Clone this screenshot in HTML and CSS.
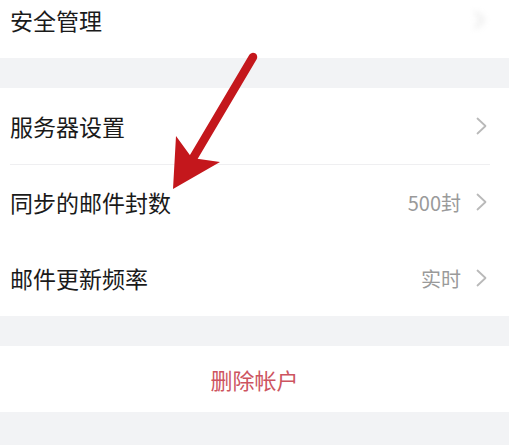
FILE: index.html
```html
<!DOCTYPE html>
<html lang="zh-CN">
<head>
<meta charset="utf-8">
<link rel="stylesheet" href="styles.css">
</head>
<body>
<div class="page">
  <div class="group group-top">
    <div class="row">
      <span class="label">安全管理</span>
      <span class="right blurred">
        <svg class="chev" viewBox="0 0 11 18" width="11" height="18"><polyline points="1.5,1.5 9.5,9 1.5,16.5"/></svg>
      </span>
    </div>
  </div>
  <div class="group">
    <div class="row">
      <span class="label">服务器设置</span>
      <span class="right">
        <svg class="chev" viewBox="0 0 11 18" width="11" height="18"><polyline points="1.5,1.5 9.5,9 1.5,16.5"/></svg>
      </span>
    </div>
    <div class="row divided">
      <span class="label">同步的邮件封数</span>
      <span class="right">
        <span class="value">500封</span>
        <svg class="chev" viewBox="0 0 11 18" width="11" height="18"><polyline points="1.5,1.5 9.5,9 1.5,16.5"/></svg>
      </span>
    </div>
    <div class="row">
      <span class="label">邮件更新频率</span>
      <span class="right">
        <span class="value">实时</span>
        <svg class="chev" viewBox="0 0 11 18" width="11" height="18"><polyline points="1.5,1.5 9.5,9 1.5,16.5"/></svg>
      </span>
    </div>
  </div>
  <div class="group">
    <div class="delete">删除帐户</div>
  </div>
  <svg class="arrow" viewBox="0 0 509 445" width="509" height="445">
    <line x1="253" y1="57" x2="192" y2="160" stroke="#c4171c" stroke-width="8.5" stroke-linecap="round"/>
    <polygon points="173,189 176,136 192,158 220,162" fill="#c4171c"/>
  </svg>
</div>
</body>
</html>
```

FILE: styles.css
```css
html, body {
  margin: 0;
  padding: 0;
}
body {
  background: #f2f3f5;
  font-family: "Noto Sans CJK SC", "Noto Sans", sans-serif;
  overflow: hidden;
}
.page {
  position: relative;
  width: 509px;
  height: 445px;
  overflow: hidden;
  display: flex;
  flex-direction: column;
  gap: 30px;
}
.group {
  background: #ffffff;
}
.group-top {
  margin-top: -18px;
}
.row {
  height: 76px;
  display: flex;
  align-items: center;
  justify-content: space-between;
  padding: 0 22px 0 10px;
  position: relative;
}
.row.divided::before {
  content: "";
  position: absolute;
  top: 0;
  left: 10px;
  right: 19px;
  height: 1px;
  background: #efeff1;
}
.label {
  font-size: 23px;
  color: #1a1a1a;
}
.right {
  display: flex;
  align-items: center;
  gap: 15px;
}
.value {
  font-size: 20px;
  color: #9a9a9a;
}
.chev {
  display: block;
}
.chev polyline {
  fill: none;
  stroke: #b9b9b9;
  stroke-width: 1.8;
  stroke-linecap: round;
  stroke-linejoin: round;
}
.blurred {
  filter: blur(3px);
  opacity: 0.5;
  margin-right: 2px;
}
.delete {
  height: 66px;
  display: flex;
  align-items: center;
  justify-content: center;
  font-size: 22px;
  color: #cd5460;
}
.arrow {
  position: absolute;
  left: 0;
  top: 0;
}
```
